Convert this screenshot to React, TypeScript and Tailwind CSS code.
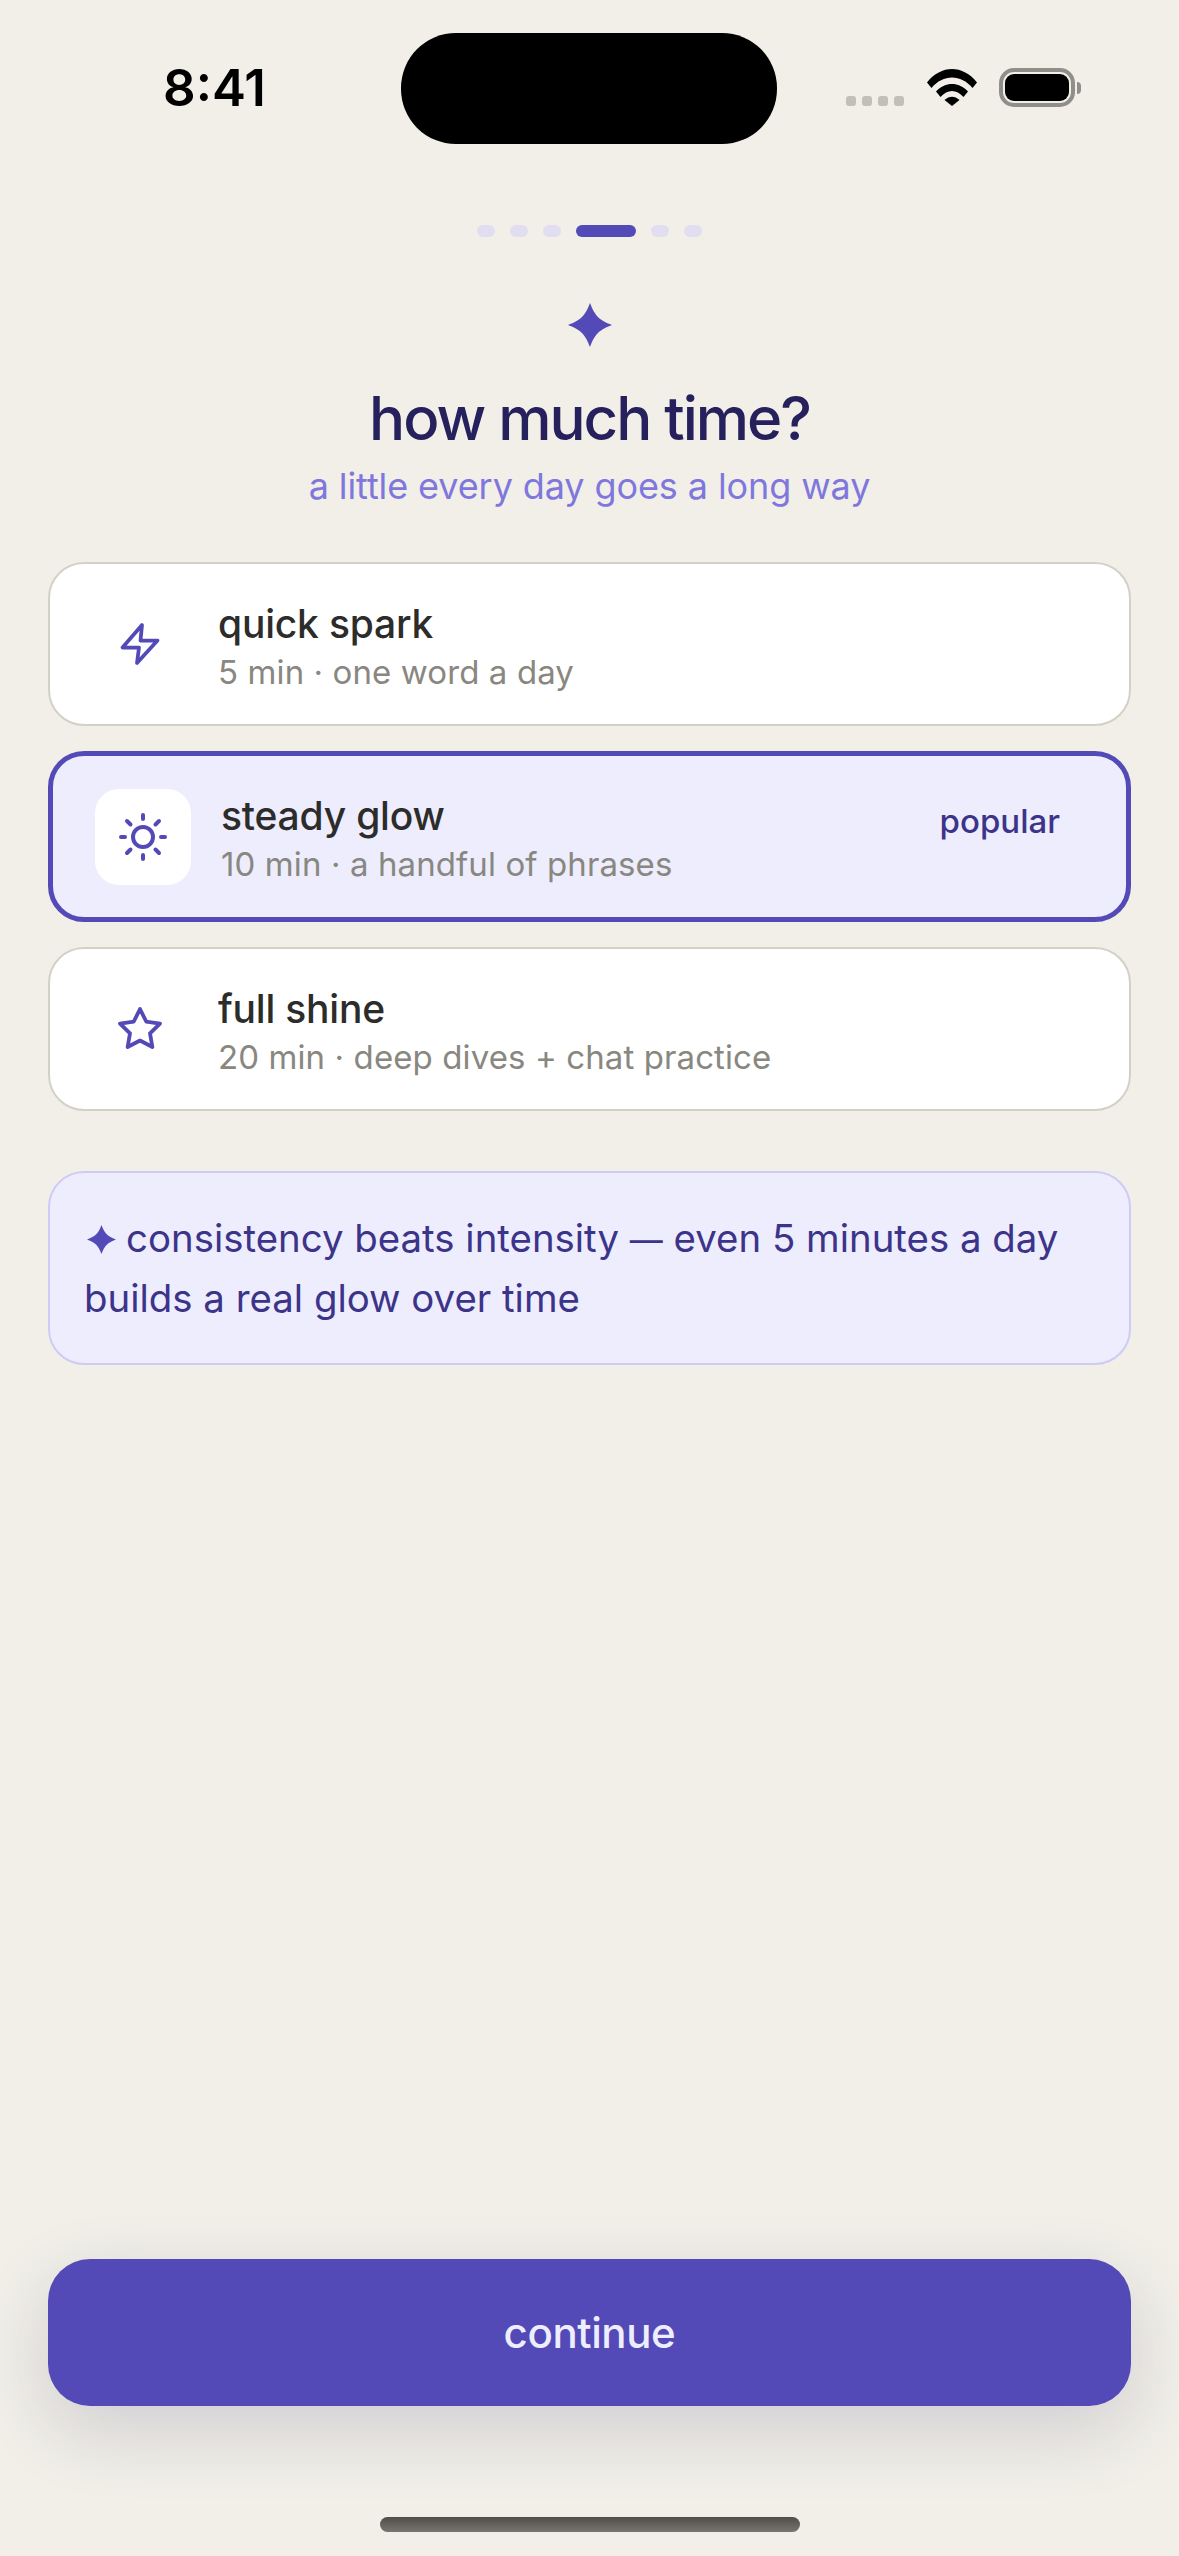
function Sparkle({ className }: { className: string }) {
  return (
    <svg viewBox="0 0 44 44" className={className} fill="currentColor">
      <path d="M22 0C27 13 31 17 44 22C31 27 27 31 22 44C17 31 13 27 0 22C13 17 17 13 22 0Z" />
    </svg>
  );
}

function Wifi() {
  return (
    <svg viewBox="0 0 50 37" className="w-[50px] h-[37px]" fill="#000">
      <path d="M0 13.5C14 -4.5 36 -4.5 50 13.5L45.5 19C34 5 16 5 4.5 19Z" />
      <path d="M9 22.5C18 12.5 32 12.5 41 22.5L36.5 28C29.5 20 20.5 20 13.5 28Z" />
      <path d="M17.5 31C22 26.5 28 26.5 32.5 31L25 37Z" />
    </svg>
  );
}

function BoltIcon() {
  return (
    <svg viewBox="0 0 48 48" className="w-[48px] h-[48px]" fill="none" stroke="currentColor" strokeWidth={3.75} strokeLinejoin="round" strokeLinecap="round">
      <polygon points="26,5 6.5,27.5 23,27.5 21,43 41.5,20.5 24.5,20.5" />
    </svg>
  );
}

function SunIcon() {
  return (
    <svg viewBox="0 0 48 48" className="w-[48px] h-[48px]" fill="none" stroke="currentColor" strokeWidth={4} strokeLinecap="round">
      <circle cx="24" cy="24" r="10" />
      <path d="M24 2V6M24 42V46M2 24H6M42 24H46M8 8L11.5 11.5M36.5 36.5L40 40M8 40L11.5 36.5M36.5 11.5L40 8" />
    </svg>
  );
}

function StarIcon() {
  return (
    <svg viewBox="0 0 24 24" className="w-[48px] h-[48px]" fill="none" stroke="currentColor" strokeWidth={1.9} strokeLinejoin="round" strokeLinecap="round">
      <polygon points="12 2 15.09 8.26 22 9.27 17 14.14 18.18 21.02 12 17.77 5.82 21.02 7 14.14 2 9.27 8.91 8.26" />
    </svg>
  );
}

function Option({
  icon,
  title,
  sub,
  selected,
}: {
  icon: React.ReactNode;
  title: string;
  sub: string;
  selected?: boolean;
}) {
  return (
    <div
      className={
        selected
          ? "flex items-center gap-[30px] h-[171px] px-[42px] rounded-[36px] border-[5px] border-[#534AB7] bg-[#EEEDFE]"
          : "flex items-center gap-[30px] h-[164px] px-[42px] rounded-[36px] border-[2px] border-[#D3D1C7] bg-white"
      }
    >
      <div
        className={
          selected
            ? "flex items-center justify-center w-[96px] h-[96px] rounded-[24px] bg-white text-[#534AB7]"
            : "flex items-center justify-center w-[96px] h-[96px] text-[#534AB7]"
        }
      >
        {icon}
      </div>
      <div className="flex-1 flex flex-col pt-[5px]">
        <span className="text-[39px] leading-[49px] tracking-[-0.2px] font-medium text-[#2C2C2A]">{title}</span>
        <span className="text-[33px] leading-[46px] mt-[1px] tracking-[0.1px] text-[#888780]">{sub}</span>
      </div>
      {selected && (
        <span className="self-start mt-[42px] mr-[24px] text-[33px] leading-[46px] font-medium text-[#3C3489]">popular</span>
      )}
    </div>
  );
}

export default function App() {
  return (
    <div className="w-[1179px] h-[2556px] flex flex-col items-stretch bg-[#F1EFE8] font-['Inter',sans-serif] overflow-hidden">
      <div className="h-[144px] relative shrink-0">
        <span className="absolute left-[163px] top-[58px] text-[51px] leading-[60px] font-semibold text-black">8:41</span>
        <div className="absolute left-[401px] top-[33px] w-[376px] h-[111px] rounded-[55px] bg-black" />
        <div className="absolute left-[846px] top-[96px] flex gap-[6px]">
          <div className="w-[10px] h-[10px] rounded-[3px] bg-[#C0BFB8]" />
          <div className="w-[10px] h-[10px] rounded-[3px] bg-[#C0BFB8]" />
          <div className="w-[10px] h-[10px] rounded-[3px] bg-[#C0BFB8]" />
          <div className="w-[10px] h-[10px] rounded-[3px] bg-[#C0BFB8]" />
        </div>
        <div className="absolute left-[927px] top-[69px]">
          <Wifi />
        </div>
        <div className="absolute left-[999px] top-[68px] w-[76px] h-[39px] rounded-[15px] border-[4px] border-[#8F8E88] p-[2px]">
          <div className="w-full h-full rounded-[9px] bg-black" />
        </div>
        <div className="absolute left-[1077px] top-[82px] w-[4px] h-[12px] rounded-r-[4px] bg-[#8F8E88]" />
      </div>

      <div className="flex justify-center gap-[15px] mt-[81px] shrink-0">
        <div className="w-[18px] h-[12px] rounded-full bg-[#E0DEF0]" />
        <div className="w-[18px] h-[12px] rounded-full bg-[#E0DEF0]" />
        <div className="w-[18px] h-[12px] rounded-full bg-[#E0DEF0]" />
        <div className="w-[60px] h-[12px] rounded-full bg-[#534AB7]" />
        <div className="w-[18px] h-[12px] rounded-full bg-[#E0DEF0]" />
        <div className="w-[18px] h-[12px] rounded-full bg-[#E0DEF0]" />
      </div>

      <div className="flex flex-col items-center mt-[66px] shrink-0">
        <Sparkle className="w-[44px] h-[44px] text-[#534AB7]" />
        <h1 className="mt-[35px] text-[60px] leading-[72px] font-medium text-[#26215C] tracking-[-2px]">how much time?</h1>
        <p className="mt-[8px] mb-[2px] text-[36px] leading-[48px] tracking-[-0.1px] text-[#7F77DD]">a little every day goes a long way</p>
      </div>

      <div className="flex flex-col gap-[25px] mx-[48px] mt-[50px] shrink-0">
        <Option icon={<BoltIcon />} title="quick spark" sub="5 min · one word a day" />
        <Option icon={<SunIcon />} title="steady glow" sub="10 min · a handful of phrases" selected />
        <Option icon={<StarIcon />} title="full shine" sub="20 min · deep dives + chat practice" />
      </div>

      <div className="mx-[48px] mt-[60px] px-[34px] py-[35px] rounded-[36px] border-[2px] border-[#CECBF6] bg-[#EEEDFE] text-[38.4px] leading-[60px] text-[#3C3489] shrink-0">
        <Sparkle className="inline-block w-[29px] h-[29px] ml-[3px] mr-[10px] align-[-2px] text-[#534AB7]" />
        consistency beats intensity <span className="text-[33px] leading-none">—</span> even 5 minutes a day
        <br />
        builds a real glow over time
      </div>

      <button className="mx-[48px] mt-auto h-[147px] rounded-[42px] bg-[#534AB7] text-[42px] tracking-[-0.4px] font-medium text-[#EEEDFE] shadow-[0_24px_72px_rgba(38,33,92,0.16)] shrink-0">
        continue
      </button>

      <div className="self-center mt-[111px] mb-[24px] w-[420px] h-[15px] rounded-full bg-gradient-to-b from-[#4F4E49] to-[#777570] shrink-0" />
    </div>
  );
}
